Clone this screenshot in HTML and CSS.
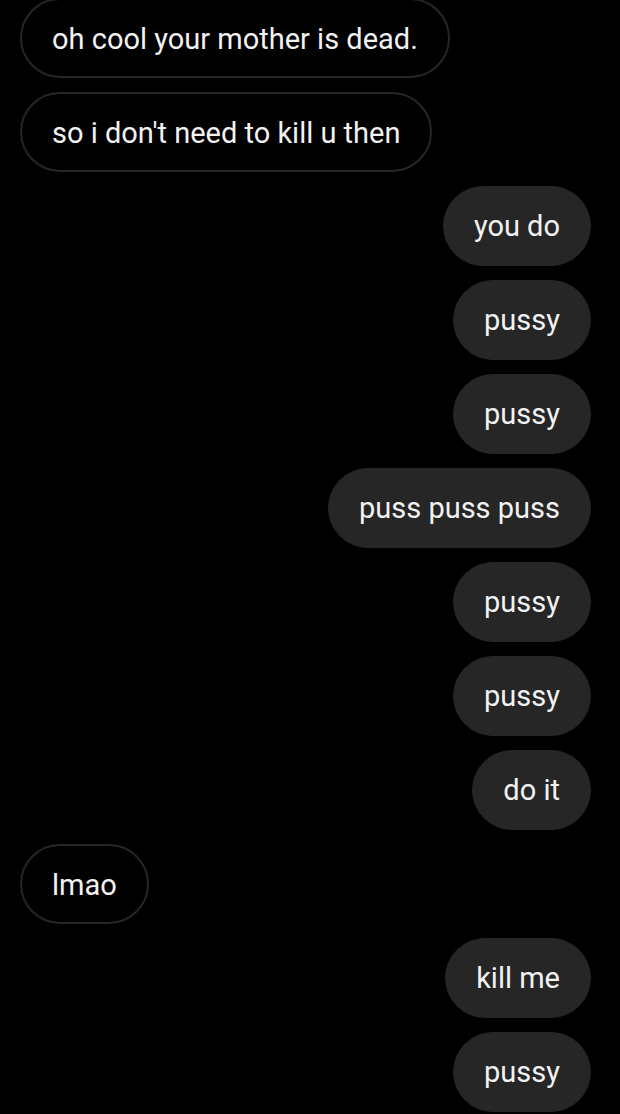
FILE: index.html
```html
<!DOCTYPE html>
<html>
<head>
<meta charset="utf-8">
<link rel="stylesheet" href="styles.css">
</head>
<body>
<div class="chat">
  <div class="msg in">oh cool your mother is dead.</div>
  <div class="msg in">so i don't need to kill u then</div>
  <div class="msg out">you do</div>
  <div class="msg out">pussy</div>
  <div class="msg out">pussy</div>
  <div class="msg out">puss puss puss</div>
  <div class="msg out">pussy</div>
  <div class="msg out">pussy</div>
  <div class="msg out">do it</div>
  <div class="msg in">lmao</div>
  <div class="msg out">kill me</div>
  <div class="msg out">pussy</div>
</div>
</body>
</html>
```
FILE: styles.css
```css
html, body {
  margin: 0;
  padding: 0;
  background: #000;
  overflow: hidden;
}
.chat {
  display: flex;
  flex-direction: column;
  gap: 14px;
  margin-top: -2px;
  padding: 0 29px 0 20px;
}
.msg {
  box-sizing: border-box;
  height: 80px;
  border-radius: 40px;
  padding: 0 30px;
  font-family: Roboto, "Liberation Sans", sans-serif;
  font-size: 29px;
  line-height: 79px;
  color: #f2f2f2;
  white-space: nowrap;
}
.in {
  align-self: flex-start;
  border: 2px solid #262626;
  background: #000;
}
.out {
  align-self: flex-end;
  border: 1px solid #262626;
  background: #262626;
}
```
